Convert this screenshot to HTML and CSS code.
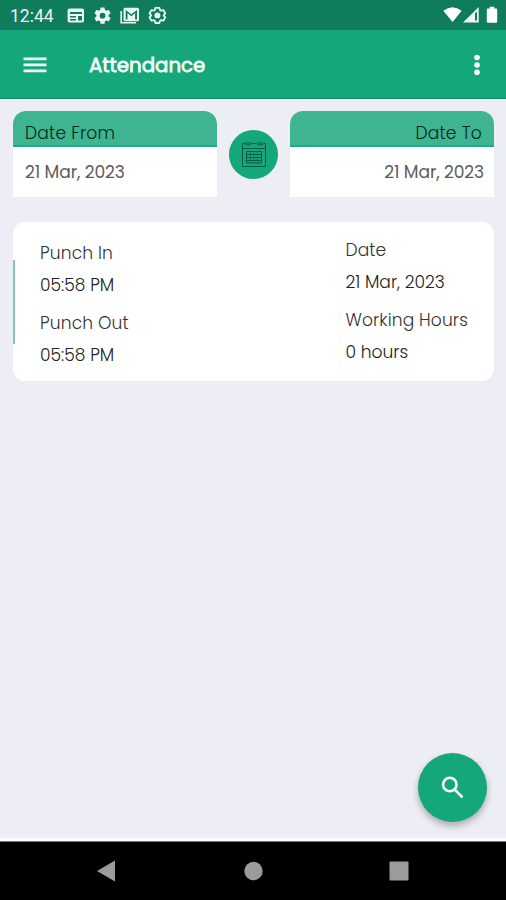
FILE: index.html
```
<!DOCTYPE html>
<html lang="en">
<head>
<meta charset="utf-8">
<title>Attendance</title>
<link rel="stylesheet" href="styles.css">
</head>
<body>
<div class="screen">
  <div class="statusbar">
    <span class="clock">12:44</span>
    <svg class="notices" width="100" height="18" viewBox="0 0 100 18" fill="#e9f7f1">
      <path fill-rule="evenodd" d="M2.300 1.500h13A1.700 1.700 0 0 1 17 3.200v10.500a1.700 1.700 0 0 1-1.700 1.700h-13a1.700 1.700 0 0 1-1.700-1.700V3.200a1.700 1.700 0 0 1 1.700-1.700zM3 5v2h12V5zM3 9v1.500h6V9zM3 12v1.500h6V12zM11 9v4.500h4V9z"/>
      <g transform="translate(25.700 -1.200) scale(.82)"><path d="M19.430 12.980c.04-.32.070-.64.070-.98s-.03-.66-.07-.98l2.110-1.650c.19-.15.240-.42.120-.64l-2-3.460c-.12-.22-.39-.3-.61-.22l-2.490 1c-.52-.4-1.080-.73-1.690-.98l-.38-2.650C14.460 2.180 14.250 2 14 2h-4c-.25 0-.46.180-.49.420l-.38 2.650c-.61.250-1.170.59-1.690.98l-2.490-1c-.23-.09-.49 0-.61.220l-2 3.460c-.13.220-.07.490.12.640l2.110 1.650c-.04.320-.07.650-.07.980s.03.660.07.980l-2.110 1.650c-.19.150-.24.420-.12.640l2 3.460c.12.220.39.300.61.220l2.490-1c.52.400 1.080.730 1.690.980l.38 2.650c.03.240.24.420.49.420h4c.25 0 .46-.18.490-.42l.38-2.650c.61-.25 1.170-.59 1.690-.98l2.490 1c.23.090.49 0 .61-.22l2-3.460c.12-.22.070-.49-.12-.64zM12 15.500A3.500 3.500 0 1 1 12 8.500a3.500 3.500 0 0 1 0 7z"/></g>
      <path d="M54.200 4v11.800H69" fill="none" stroke="#e9f7f1" stroke-width="1.600"/>
      <path fill-rule="evenodd" d="M58 .7h12.500a1.500 1.500 0 0 1 1.500 1.500v10.600a1.500 1.500 0 0 1-1.500 1.500H58a1.500 1.500 0 0 1-1.500-1.500V2.200A1.500 1.500 0 0 1 58 .7zM58.700 3v9.500h1.800V6l3.800 3.200L68.100 6v6.500H70V3l-5.700 4.200z"/>
      <g transform="translate(80.800 -1.200) scale(.8)"><path fill="none" stroke="#e9f7f1" stroke-width="2.200" stroke-linejoin="round" d="M9.500 2.500h5l.8 2.900 1.200.7 2.900-.8 2.500 4.300-2 2.100v.6l2 2.100-2.500 4.300-2.900-.8-1.200.7-.8 2.900h-5l-.8-2.900-1.200-.7-2.900.8-2.500-4.300 2-2.100v-.6l-2-2.100 2.500-4.300 2.900.8 1.200-.7z"/><circle cx="12" cy="12" r="3.700"/></g>
    </svg>
    <svg class="signals" width="56" height="18" viewBox="0 0 56 18" fill="#fff">
      <path d="M.3 4.800Q9.600-2.500 18.600 4.800L9.600 16z"/>
      <path fill-rule="evenodd" d="M20 16.500 35.700 1v15.500zM32 7.500v7h2V5.500z" opacity=".92"/>
      <path d="M46.700.8h4.600v1.700h1.900a1 1 0 0 1 1 1v12a1.200 1.200 0 0 1-1.200 1.200h-8a1.200 1.200 0 0 1-1.200-1.200v-12a1 1 0 0 1 1-1h1.900z"/>
    </svg>
  </div>

  <header class="appbar">
    <svg class="menu" width="24" height="18" viewBox="0 0 24 18" fill="#eefaf5"><path d="M.5 1.500h23v2.700H.5zM.5 7.500h23v2.700H.5zM.5 13.500h23v2.700H.5z"/></svg>
    <h1 class="title">Attendance</h1>
    <svg class="more" width="8" height="22" viewBox="0 0 8 22" fill="#fff"><circle cx="4" cy="3.500" r="2.800"/><circle cx="4" cy="11" r="2.800"/><circle cx="4" cy="18.300" r="2.800"/></svg>
  </header>

  <main class="content">
    <section class="range">
      <div class="picker">
        <div class="picker-head">Date From</div>
        <div class="picker-value">21 Mar, 2023</div>
      </div>
      <div class="calendar">
        <svg width="26" height="28" viewBox="0 0 26 28" fill="none" stroke="#075b43" stroke-width="1">
          <path d="M3.500 2.500h-2v23h23v-23h-2M10.500 2.500h5M1.500 7.500h23"/>
          <circle cx="5.500" cy="2.800" r="1.300"/><circle cx="8.500" cy="2.800" r="1.300"/><circle cx="17.500" cy="2.800" r="1.300"/><circle cx="20.500" cy="2.800" r="1.300"/>
          <path d="M5.500 10.500h15v11.500h-15zM5.500 13.500h15M5.500 16.500h15M5.500 19.500h15"/>
          <path d="M9.500 10.500v11.500M13 10.500v11.500M16.500 10.500v11.500" opacity=".5"/>
        </svg>
      </div>
      <div class="picker picker-to">
        <div class="picker-head">Date To</div>
        <div class="picker-value">21 Mar, 2023</div>
      </div>
    </section>

    <section class="record">
      <div class="marker"></div>
      <div class="times">
        <p class="label">Punch In</p>
        <p>05:58 PM</p>
        <p class="label second">Punch Out</p>
        <p>05:58 PM</p>
      </div>
      <div class="summary">
        <p class="label">Date</p>
        <p>21 Mar, 2023</p>
        <p class="label second">Working Hours</p>
        <p>0 hours</p>
      </div>
    </section>

    <div class="search">
      <svg width="24" height="24" viewBox="0 0 24 24" fill="none" stroke="#fff" stroke-width="2.600"><circle cx="8.800" cy="8.500" r="6.700"/><path d="m13.500 13.300 8 8"/></svg>
    </div>
  </main>

  <nav class="navbar">
    <svg width="20" height="22" viewBox="0 0 20 22" fill="#9b9b9b"><path d="M1 11 19 .5v21z"/></svg>
    <svg width="20" height="22" viewBox="0 0 20 22" fill="#9b9b9b"><circle cx="10.500" cy="11" r="9.200"/></svg>
    <svg width="20" height="22" viewBox="0 0 20 22" fill="#9b9b9b"><rect x=".5" y="1.500" width="19" height="19" rx="1"/></svg>
  </nav>
</div>
</body>
</html>
```
FILE: styles.css
```
* { box-sizing: border-box; }
body, h1, p { margin: 0; }
body { font-family: Poppins, Inter, "Liberation Sans", sans-serif; font-size: 17.1px; font-weight: 300; color: #222; }
svg { display: block; flex: none; }
span, p, h1 { white-space: nowrap; }
.screen { width: 506px; height: 900px; display: flex; flex-direction: column; background: #ecedf5; overflow: hidden; }

.statusbar { height: 30px; flex: none; background: #0f7c5c; display: flex; align-items: flex-start; padding: 6px 7px 0 10px; }
.clock { width: 57px; font: 400 17.5px/20px Roboto, sans-serif; color: #e9f7f1; }
.notices { margin-top: 1px; }
.signals { margin-left: auto; }

.appbar { height: 69px; flex: none; background: #13a77a; border-bottom: 1px solid #109069; display: flex; align-items: center; padding: 0 25px 0 23px; }
.menu { margin-top: 2px; }
.title { margin: 2px 0 0 42px; font-size: 19.8px; line-height: 28px; font-weight: 400; color: #effbf6; -webkit-text-stroke: .8px #effbf6; }
.more { margin: 1px 0 0 auto; }

.content { flex: 1; position: relative; padding: 11px 12px 0 13px; border-top: 1px solid #effcfa; border-bottom: 3px solid #fafafb; }
.range { display: flex; justify-content: space-between; }
.picker { width: 204px; height: 86px; border-radius: 13px 13px 0 0; overflow: hidden; background: #fff; white-space: nowrap; }
.picker-head { height: 36px; background: #3eb590; border-bottom: 2px solid #20ab82; padding: 10px 12px 0; line-height: 24px; color: #06261d; letter-spacing: .25px; font-weight: 300; }
.picker-value { padding: 13px 12px 0; line-height: 24px; color: #5c5c5c; letter-spacing: -.1px; font-weight: 400; }
.picker-to { text-align: right; }
.picker-to .picker-value { padding-right: 10px; }
.calendar { width: 49px; height: 49px; margin-top: 19px; border-radius: 50%; background: #13a77a; display: flex; align-items: center; justify-content: center; }

.record { height: 159px; margin-top: 25px; border-radius: 12px; background: #fff; display: flex; }
.record p { line-height: 32px; }
.record .label { letter-spacing: .12px; color: #333; }
.record .second { margin-top: 6px; }
.marker { width: 2px; height: 84px; margin-top: 38px; background: #83c7ab; }
.times { width: 305.5px; padding: 15px 0 0 25px; }
.summary { padding: 12px 0 0 25px; }

.search { position: absolute; right: 19px; bottom: 16px; width: 69px; height: 69px; border-radius: 50%; background: #13a77a; box-shadow: 0 4px 7px rgba(0, 0, 0, .28); display: flex; align-items: center; justify-content: center; }

.navbar { height: 59px; flex: none; background: #000; border-top: 1px solid #777; display: flex; align-items: center; justify-content: space-between; padding: 0 97px 0 96px; }
```
